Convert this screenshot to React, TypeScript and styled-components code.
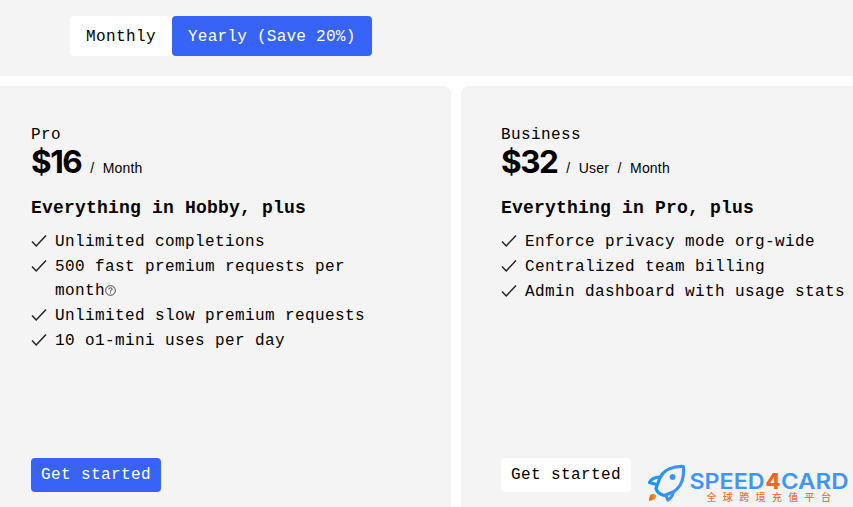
import React from "react";
import styled, { createGlobalStyle } from "styled-components";

const Global = createGlobalStyle`
  * { box-sizing: border-box; }
  body {
    margin: 0;
    background: #fff;
    color: #000;
    overflow: hidden;
    font-family: "Liberation Mono", monospace;
  }
`;

const Page = styled.main`
  position: relative;
  width: 853px;
  height: 507px;
  overflow: hidden;
  display: flex;
  flex-direction: column;
  gap: 10px;
`;

const BillingBar = styled.header`
  flex: 0 0 76px;
  padding: 16px 70px 20px;
  background: #f4f4f4;
  display: flex;
`;

const Option = styled.button<{ $active?: boolean; $width: number }>`
  width: ${(p) => p.$width}px;
  height: 40px;
  padding: 2px 0 0 16px;
  border: 0;
  border-radius: 4px;
  text-align: left;
  white-space: nowrap;
  font: 16px/38px "Liberation Mono", monospace;
  letter-spacing: ${(p) => (p.$active ? 0.25 : 0.4)}px;
  color: ${(p) => (p.$active ? "#fff" : "#000")};
  background: ${(p) => (p.$active ? "#3764f6" : "#fff")};
`;

const Plans = styled.section`
  flex: 1;
  display: grid;
  grid-template-columns: 451px 451px;
  gap: 10px;
`;

const Card = styled.article<{ $first?: boolean }>`
  background: #f4f4f4;
  border-radius: ${(p) => (p.$first ? "0 8px 0 0" : "8px 8px 0 0")};
  padding: 39px 30px 15px ${(p) => (p.$first ? 31 : 40)}px;
  display: flex;
  flex-direction: column;
  align-items: flex-start;
`;

const PlanName = styled.div`
  font-size: 16px;
  line-height: 20px;
  letter-spacing: 0.4px;
`;

const PriceRow = styled.div`
  height: 35px;
  display: flex;
  align-items: baseline;
  gap: 9px;
  white-space: nowrap;
  font-family: "Liberation Sans", sans-serif;
`;

const Price = styled.span`
  font-family: Inter, sans-serif;
  font-size: 31.5px;
  line-height: 34px;
  font-weight: 700;
  letter-spacing: -1.5px;
`;

const Period = styled.span`
  font-size: 14px;
  letter-spacing: 0.2px;
  word-spacing: 4.3px;
`;

const Heading = styled.h2`
  margin: 17px 0 11px;
  font-size: 18px;
  line-height: 22px;
  letter-spacing: 0.2px;
  white-space: nowrap;
`;

const Features = styled.ul`
  margin: 0;
  padding: 0;
  list-style: none;
`;

const Feature = styled.li`
  display: flex;
  gap: 8px;
  margin-bottom: 0.6px;
  font-size: 16px;
  line-height: 24.3px;
  letter-spacing: 0.4px;
  white-space: nowrap;
`;

const Check = styled.svg`
  flex: 0 0 16px;
  width: 16px;
  height: 16px;
  margin-top: 3px;
`;

const Help = styled.svg`
  width: 11px;
  height: 11px;
  vertical-align: -1px;
`;

const Action = styled.button<{ $primary?: boolean }>`
  margin-top: auto;
  width: 130px;
  height: 34px;
  padding: 0 0 0 10px;
  text-align: left;
  border: 0;
  border-radius: 4px;
  white-space: nowrap;
  font: 16px/34px "Liberation Mono", monospace;
  letter-spacing: 0.4px;
  color: ${(p) => (p.$primary ? "#fff" : "#000")};
  background: ${(p) => (p.$primary ? "#3764f6" : "#fff")};
`;

const Watermark = styled.svg`
  position: absolute;
  right: 0;
  bottom: 0;
  width: 213px;
  height: 52px;
`;

type Plan = {
  name: string;
  price: string;
  period: string;
  heading: string;
  features: React.ReactNode[];
};

const plans: Plan[] = [
  {
    name: "Pro",
    price: "$16",
    period: "/ Month",
    heading: "Everything in Hobby, plus",
    features: [
      "Unlimited completions",
      <>
        500 fast premium requests per
        <br />
        month
        <Help viewBox="0 0 10 10" fill="none" stroke="#444" strokeWidth="0.9">
          <circle cx="5" cy="5" r="4.4" />
          <path d="M3.5 4Q3.5 2.6 5 2.6T6.5 3.9Q6.5 4.7 5 5.2V6M5 6.8V7.7" />
        </Help>
      </>,
      "Unlimited slow premium requests",
      "10 o1-mini uses per day",
    ],
  },
  {
    name: "Business",
    price: "$32",
    period: "/ User / Month",
    heading: "Everything in Pro, plus",
    features: [
      "Enforce privacy mode org-wide",
      "Centralized team billing",
      "Admin dashboard with usage stats",
    ],
  },
];

function Brand() {
  return (
    <Watermark viewBox="0 0 213 52">
      <defs>
        <linearGradient id="hull" x1="0" x2="1">
          <stop offset="0" stopColor="#1599e6" />
          <stop offset="0.5" stopColor="#3f91fb" />
        </linearGradient>
        <linearGradient id="flame" x1="0" x2="1">
          <stop offset="0" stopColor="#e85d22" />
          <stop offset="1" stopColor="#ff9710" />
        </linearGradient>
      </defs>
      <g fill="none" stroke="url(#hull)" strokeWidth="3.2" strokeLinejoin="round">
        <path d="M43.4 11.5C33 11 24 15 19.8 23L16 33.5Q17.5 39 24.5 40.5L34 36.5C42 31 44.2 21 43.4 11.5Z" />
        <path d="M19.5 22Q12 22.5 9.5 27.5L16.5 29.5M25.5 40L28 45Q32.8 42 33 37.2" />
      </g>
      <circle cx="32.6" cy="22" r="2.9" fill="#3f91fb" />
      <path d="M9.2 46C8.8 42 10.5 38.5 13 39C16.5 39 17 42 14.8 44Q12.5 45.5 9.2 46Z" fill="url(#flame)" />
      <g fontFamily="Inter, sans-serif" fontSize="21.5" fontWeight="600" fill="#4094fc">
        <text x="49.5" y="33.7" textLength="75" lengthAdjust="spacingAndGlyphs">SPEED</text>
        <text x="125.5" y="33.7" textLength="15" lengthAdjust="spacingAndGlyphs" fontWeight="800" fill="#f26522">4</text>
        <text x="141" y="33.7" textLength="67.5" lengthAdjust="spacingAndGlyphs">CARD</text>
      </g>
      <text x="66.5" y="45.5" fontFamily="'Noto Sans CJK SC', sans-serif" fontSize="10" fontWeight="500" letterSpacing="6.35" fill="#ee733c">
        全球跨境充值平台
      </text>
    </Watermark>
  );
}

export default function App() {
  return (
    <Page>
      <Global />
      <BillingBar>
        <Option $width={102}>Monthly</Option>
        <Option $width={200} $active>Yearly (Save 20%)</Option>
      </BillingBar>
      <Plans>
        {plans.map((plan, i) => (
          <Card key={plan.name} $first={i === 0}>
            <PlanName>{plan.name}</PlanName>
            <PriceRow>
              <Price>{plan.price}</Price>
              <Period>{plan.period}</Period>
            </PriceRow>
            <Heading>{plan.heading}</Heading>
            <Features>
              {plan.features.map((feature, n) => (
                <Feature key={n}>
                  <Check viewBox="0 0 16 16" fill="none" stroke="#222" strokeWidth="1.5">
                    <path d="M1 8.5L5.2 12.9L15 2.5" />
                  </Check>
                  <span>{feature}</span>
                </Feature>
              ))}
            </Features>
            <Action $primary={i === 0}>Get started</Action>
          </Card>
        ))}
      </Plans>
      <Brand />
    </Page>
  );
}
